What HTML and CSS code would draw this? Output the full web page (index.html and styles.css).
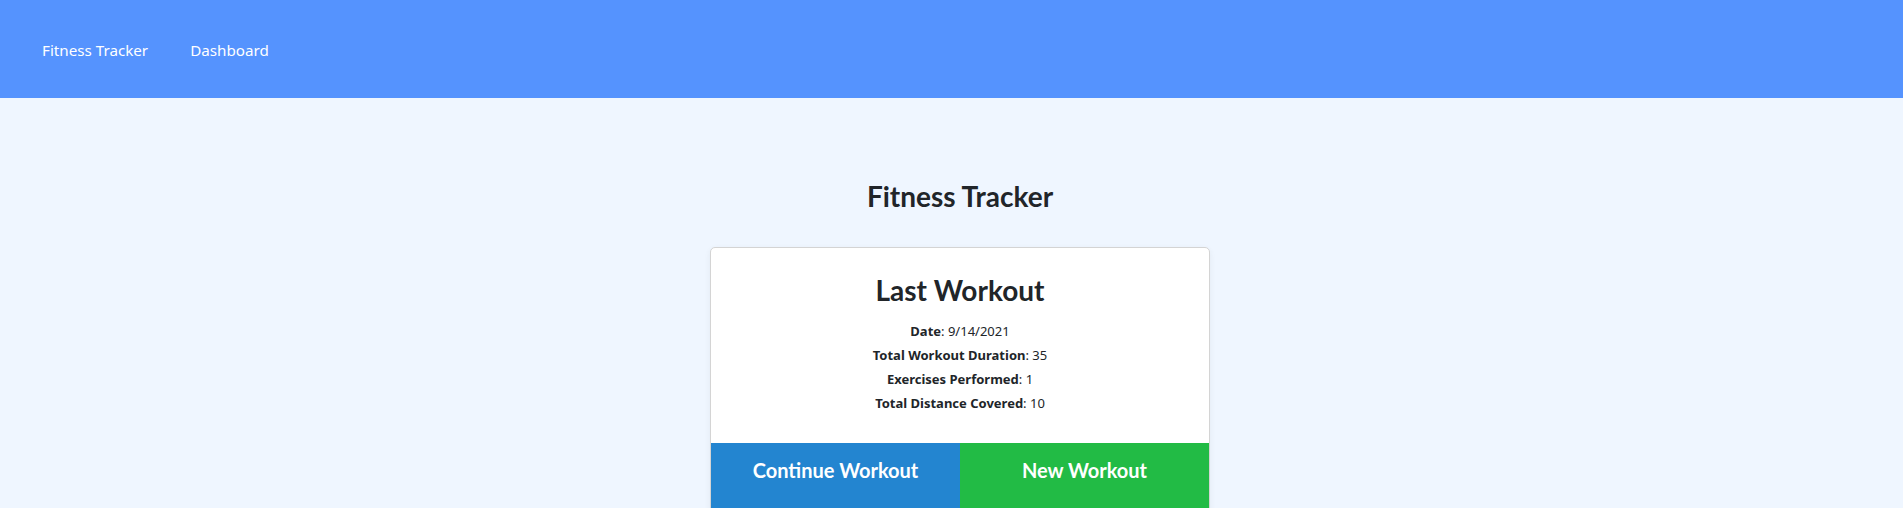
FILE: index.html
```html
<!DOCTYPE html>
<html lang="en">
<head>
<meta charset="utf-8">
<title>Fitness Tracker</title>
<link rel="stylesheet" href="styles.css">
</head>
<body>
<nav class="navbar">
  <a class="nav-link" href="#">Fitness Tracker</a>
  <a class="nav-link" href="#">Dashboard</a>
</nav>
<main class="hero">
  <h1 class="page-title">Fitness Tracker</h1>
  <section class="card">
    <div class="card-body">
      <h2 class="card-title">Last Workout</h2>
      <p class="stat"><strong>Date</strong>: 9/14/2021</p>
      <p class="stat"><strong>Total Workout Duration</strong>: 35</p>
      <p class="stat"><strong>Exercises Performed</strong>: 1</p>
      <p class="stat"><strong>Total Distance Covered</strong>: 10</p>
    </div>
    <div class="actions">
      <a class="btn btn-continue" href="#">Continue Workout</a>
      <a class="btn btn-new" href="#">New Workout</a>
    </div>
  </section>
</main>
</body>
</html>
```
FILE: styles.css
```css
* { box-sizing: border-box; }
html, body { margin: 0; padding: 0; }
body {
  background: #ffffff;
  font-family: "Noto Sans", "Open Sans", sans-serif;
  color: #212529;
  overflow: hidden;
}
.navbar {
  height: 98px;
  background: #5593fe;
  display: flex;
  align-items: center;
  padding-left: 42px;
  gap: 42px;
}
.nav-link {
  color: #ffffff;
  text-decoration: none;
  font-size: 15.2px;
  line-height: 24px;
  padding-top: 2px;
}
.hero {
  background: #eff6ff;
  height: 410px;
  display: flex;
  flex-direction: column;
  align-items: center;
  padding-left: 17px;
  padding-top: 82px;
}
.page-title {
  margin: 0;
  font-family: Lato, sans-serif;
  font-weight: 700;
  font-size: 28px;
  line-height: 1.2;
  color: #212529;
}
.card {
  margin-top: 33px;
  width: 500px;
  flex-shrink: 0;
  background: #ffffff;
  border: 1px solid #d4d4d4;
  border-radius: 5px;
  box-shadow: 0 2px 6px rgba(0, 0, 0, 0.06);
  overflow: hidden;
}
.card-body {
  padding: 26px 16px 28px;
  text-align: center;
}
.card-title {
  margin: 0 0 12px;
  font-family: Lato, sans-serif;
  font-weight: 700;
  font-size: 28px;
  line-height: 1.2;
  color: #212529;
}
.stat {
  margin: 0;
  font-size: 13px;
  line-height: 24px;
  color: #212529;
}
.stat strong { font-weight: 700; }
.actions {
  display: flex;
  height: 74px;
}
.btn {
  flex: 1;
  display: flex;
  justify-content: center;
  padding-top: 15px;
  font-family: Lato, sans-serif;
  font-weight: 700;
  font-size: 20px;
  line-height: 24px;
  color: #ffffff;
  text-decoration: none;
}
.btn-continue { background: #2385d0; }
.btn-new { background: #22bb45; }
```
